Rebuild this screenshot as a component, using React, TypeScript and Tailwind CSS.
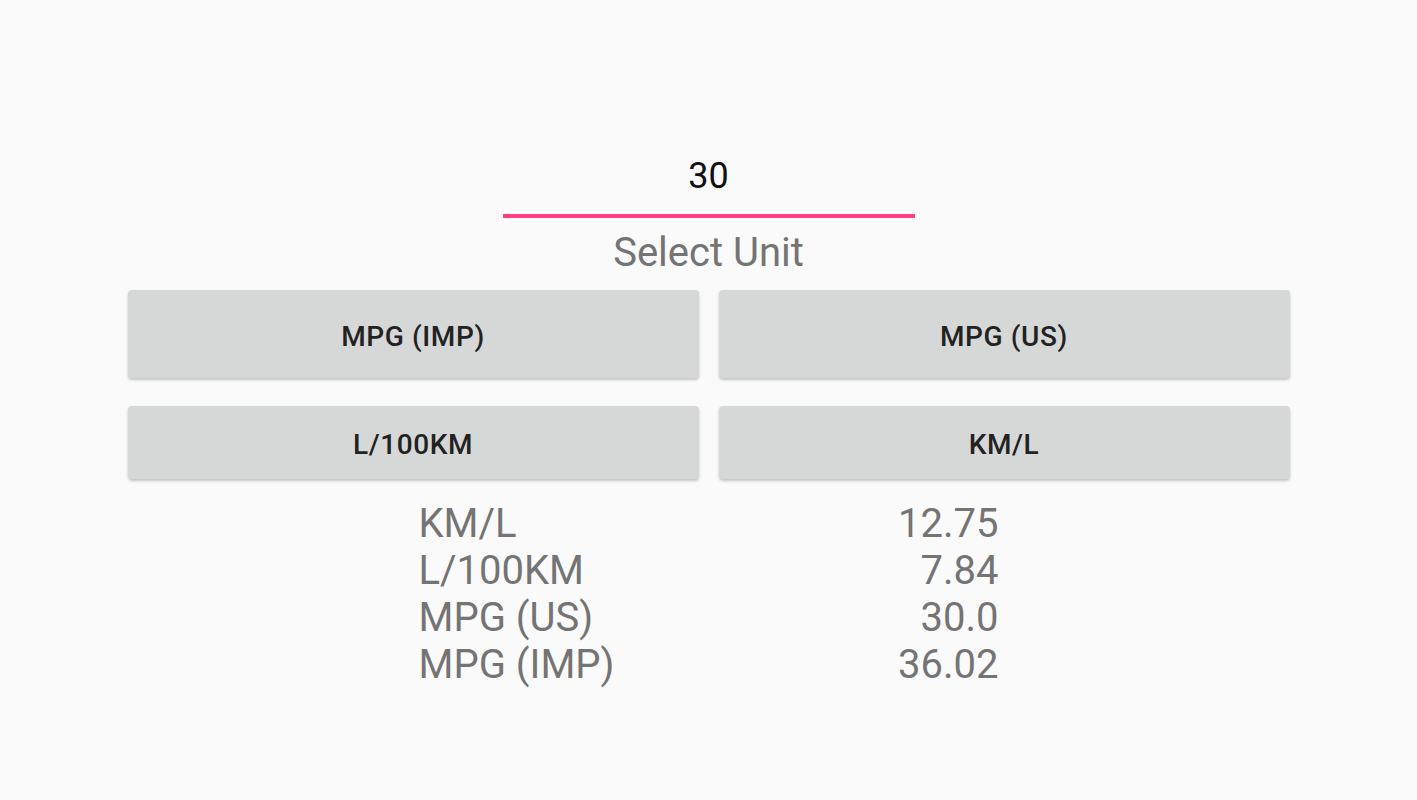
import React, { useState } from 'react';

type Unit = 'MPG (IMP)' | 'MPG (US)' | 'L/100KM' | 'KM/L';

const units: Unit[] = ['MPG (IMP)', 'MPG (US)', 'L/100KM', 'KM/L'];

// the app cuts off instead of rounding
const trunc2 = (v: number) => (Math.floor(v * 100 + 1e-9) / 100).toFixed(2);

const App: React.FC = () => {
  const [value, setValue] = useState('30');
  const [unit, setUnit] = useState<Unit>('MPG (US)');

  // everything goes through km/l
  const n = parseFloat(value) || 0;
  const toKml: Record<Unit, (v: number) => number> = {
    'MPG (IMP)': (v) => v * 0.354006,
    'MPG (US)': (v) => v * 0.425144,
    'L/100KM': (v) => (v ? 100 / v : 0),
    'KM/L': (v) => v,
  };
  const kml = toKml[unit](n);
  const results: [string, string][] = [
    ['KM/L', trunc2(kml)],
    ['L/100KM', kml ? trunc2(100 / kml) : '0.0'],
    ['MPG (US)', unit === 'MPG (US)' ? n.toFixed(1) : trunc2(kml / 0.425144)],
    ['MPG (IMP)', trunc2(kml / 0.354006)],
  ];

  return (
    <div className="min-h-screen bg-[#fafafa] font-['Roboto',sans-serif] flex flex-col items-center">
      <div className="w-[412px] mt-[155px] pb-[17px] border-b-4 border-[#ff4081]">
        <input
          value={value}
          onChange={(e) => setValue(e.target.value)}
          className="w-full bg-transparent text-center text-[36px] leading-[42px] h-[42px] text-[#111] outline-none"
        />
      </div>
      <p className="mt-[11px] text-[40px] leading-[47px] text-[#747474]">Select Unit</p>

      <div className="w-[1162px] mt-[14px] grid grid-cols-2 gap-x-5">
        {units.map((u, i) => (
          <button
            key={u}
            onClick={() => setUnit(u)}
            className={`${i < 2 ? 'h-[88px] pt-[5px]' : 'h-[73px] mt-[28px] pt-[4px]'} rounded bg-[#d6d7d7] text-[28px] font-medium tracking-[0.6px] text-[#222] shadow-[0_2px_3px_rgba(0,0,0,0.22)]`}
          >
            {u}
          </button>
        ))}
      </div>

      <div className="w-[580px] mt-[21px] grid grid-cols-2 text-[40px] leading-[47px] text-[#747474]">
        {results.map(([label, val]) => (
          <React.Fragment key={label}>
            <span>{label}</span>
            <span className="text-right">{val}</span>
          </React.Fragment>
        ))}
      </div>
    </div>
  );
};

export default App;
